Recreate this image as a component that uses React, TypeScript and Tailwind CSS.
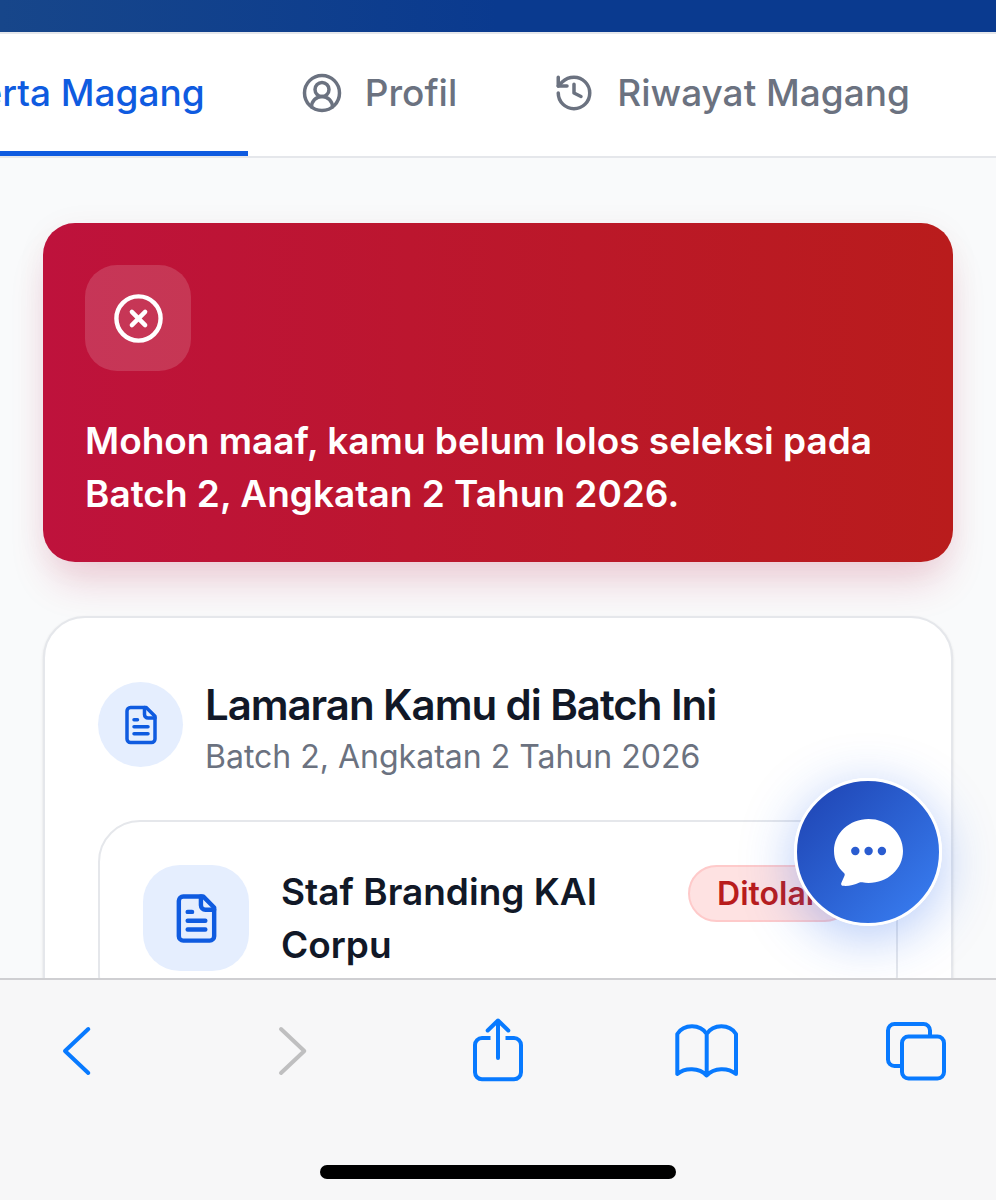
import type { ReactNode } from 'react';
import clsx from 'clsx';
import { CircleUserRound, CircleX, History, IdCard, type LucideIcon } from 'lucide-react';

interface Tab {
  label: string;
  icon: LucideIcon;
  active?: boolean;
}

const tabs: Tab[] = [
  { label: 'Peserta Magang', icon: IdCard, active: true },
  { label: 'Profil', icon: CircleUserRound },
  { label: 'Riwayat Magang', icon: History },
];

const batchName = 'Batch 2, Angkatan 2 Tahun 2026';

function FileIcon({ className }: { className: string }) {
  return (
    <svg
      viewBox="0 0 24 24"
      className={className}
      fill="none"
      stroke="currentColor"
      strokeWidth="2"
      strokeLinecap="round"
      strokeLinejoin="round"
      aria-hidden
    >
      <path d="M15 2H6a2 2 0 0 0-2 2v16a2 2 0 0 0 2 2h12a2 2 0 0 0 2-2V7Z" />
      <path d="M14 2v4a2 2 0 0 0 2 2h4" />
      <path d="M10 9H8M16 13H8M16 17H8" />
    </svg>
  );
}

function TabBar() {
  return (
    <nav className="flex shrink-0 justify-end gap-[10px] overflow-hidden border-y-2 border-gray-200 bg-white pr-[43px]">
      {tabs.map(({ label, icon: Icon, active }) => (
        <a
          key={label}
          href="#"
          aria-current={active ? 'page' : undefined}
          className={clsx(
            'flex shrink-0 items-center gap-[22px] border-b-5 px-[43px] py-8 text-[37px] leading-[53px] font-medium whitespace-nowrap',
            active ? 'border-[#0f5be0] text-[#0f5be0]' : 'border-transparent text-[#6b7280]',
          )}
        >
          <Icon size={42} aria-hidden />
          {label}
        </a>
      ))}
    </nav>
  );
}

function RejectionAlert() {
  return (
    <section
      role="status"
      className="flex flex-col gap-[43px] rounded-[32px] bg-linear-to-r/srgb from-[#be123c] to-[#b91c1c] p-[42px] text-white shadow-[0_27px_40px_-8px_rgba(190,18,60,0.18),0_4px_32px_rgba(136,19,55,0.05)]"
    >
      <div className="flex size-[106px] items-center justify-center rounded-[32px] bg-white/15">
        <CircleX size={53} aria-hidden />
      </div>
      <p className="text-[37px] leading-[53px] font-semibold">
        Mohon maaf, kamu belum lolos seleksi pada {batchName}.
      </p>
    </section>
  );
}

function ApplicationCard() {
  return (
    <section className="rounded-[42px] border-2 border-gray-200 bg-white px-[53px] pt-[60px] pb-[53px] shadow-sm">
      <div className="flex items-start gap-[22px]">
        <div className="mt-1 flex size-[85px] shrink-0 items-center justify-center rounded-full bg-[#e5eefe] text-[#0f5be0]">
          <FileIcon className="size-[42px]" />
        </div>
        <div className="flex flex-col gap-1">
          <h2 className="text-[42px] leading-[53px] font-semibold tracking-tight text-[#111827]">
            Lamaran Kamu di Batch Ini
          </h2>
          <p className="text-[32px] leading-[43px] text-[#6b7280]">{batchName}</p>
        </div>
      </div>

      <article className="mt-[42px] flex items-start gap-8 rounded-[42px] border-2 border-gray-200 p-[43px]">
        <div className="flex size-[106px] shrink-0 items-center justify-center rounded-[37px] bg-[#e5eefe] text-[#0f5be0]">
          <FileIcon className="size-[53px]" />
        </div>
        <h3 className="flex-1 text-[37px] leading-[53px] font-semibold text-[#111827]">
          Staf Branding KAI Corpu
        </h3>
        <span className="rounded-full border-2 border-[#fecaca] bg-[#fee2e2] px-[27px] py-[5px] text-[32px] leading-[43px] font-semibold text-[#b91c1c]">
          Ditolak
        </span>
      </article>
    </section>
  );
}

function ChatButton() {
  return (
    <button
      type="button"
      aria-label="Chat"
      className="absolute right-[54px] bottom-[52px] flex size-[148px] items-center justify-center rounded-full border-3 border-white bg-linear-to-br from-[#1e40af] to-[#3b82f6] bg-origin-border shadow-[0_11px_53px_rgba(37,99,235,0.35)]"
    >
      <svg viewBox="0 0 69 67" className="h-[67px] w-[69px]" aria-hidden>
        <path
          fill="#fff"
          d="M34.500 0C15.500 0 0 14 0 32c0 9 3.800 16.500 10 22 .8.8.9 1.700.5 2.700L7.300 64c-.5 1.400.2 2.700 1.700 2.800 6 .4 11-.8 16.500-3.400 1-.4 1.900-.3 2.800-.1 2 .4 4.100.6 6.200.6 19 0 34.500-13.800 34.500-32S53.500 0 34.500 0Z"
        />
        <g fill="#2a5cd0">
          <circle cx="21.300" cy="32" r="4.200" />
          <circle cx="34.600" cy="32" r="4.200" />
          <circle cx="47.900" cy="32" r="4.200" />
        </g>
      </svg>
    </button>
  );
}

function ToolbarButton({ label, disabled, children }: { label: string; disabled?: boolean; children: ReactNode }) {
  return (
    <button type="button" aria-label={label} disabled={disabled} className="text-[#087aff] disabled:text-[#bfbfc0]">
      <svg
        viewBox="0 0 64 80"
        className="h-20 w-16"
        fill="none"
        stroke="currentColor"
        strokeWidth="4"
        strokeLinecap="round"
        strokeLinejoin="round"
        aria-hidden
      >
        {children}
      </svg>
    </button>
  );
}

function BrowserToolbar() {
  return (
    <footer className="shrink-0 border-t-2 border-[#cfcfd2] bg-[#f7f7f8] pt-[31px] pb-[21px]">
      <div className="flex justify-between pr-12 pl-[45px]">
        <ToolbarButton label="Kembali">
          <path d="M43.300 18 20 40l23.300 22" />
        </ToolbarButton>
        <ToolbarButton label="Maju" disabled>
          <path d="M26 18l23.300 22L26 62" />
        </ToolbarButton>
        <ToolbarButton label="Bagikan">
          <path strokeLinecap="butt" d="M25.500 27H17a7 7 0 0 0-7 7v27.300a7 7 0 0 0 7 7h32a7 7 0 0 0 7-7V34a7 7 0 0 0-7-7h-8.500" />
          <path d="M33 47V9.500M22.700 19.500 33 9.500l10.300 10" />
        </ToolbarButton>
        <ToolbarButton label="Markah">
          <path d="M3.300 23C10 12.800 26 12.800 32.700 23 39.400 12.800 55.400 12.800 62 23v40c-8-6.500-22-6.500-29.300 1.500C25 56.500 11 56.500 3.300 63ZM32.700 23v41" />
        </ToolbarButton>
        <ToolbarButton label="Tab">
          <path strokeLinecap="butt" d="M46 25v-5.500a6.500 6.500 0 0 0-6.500-6.500h-29A6.500 6.500 0 0 0 4 19.500v29a6.500 6.500 0 0 0 6.500 6.500H18" />
          <rect x="18" y="25.500" width="42" height="42" rx="6.500" />
        </ToolbarButton>
      </div>
      <div className="mx-auto mt-[74px] h-[14px] w-[356px] max-w-full rounded-full bg-black" />
    </footer>
  );
}

export default function App() {
  return (
    <div className="flex h-screen flex-col bg-gray-50 font-['Inter',sans-serif]">
      <div className="relative flex min-h-0 flex-1 flex-col overflow-hidden">
        <header className="h-8 shrink-0 bg-linear-to-r from-[#17468a] to-[#0a3a8f] to-50%" />
        <TabBar />
        <main className="flex flex-col gap-[54px] px-[43px] pt-[65px]">
          <RejectionAlert />
          <ApplicationCard />
        </main>
        <ChatButton />
      </div>
      <BrowserToolbar />
    </div>
  );
}
